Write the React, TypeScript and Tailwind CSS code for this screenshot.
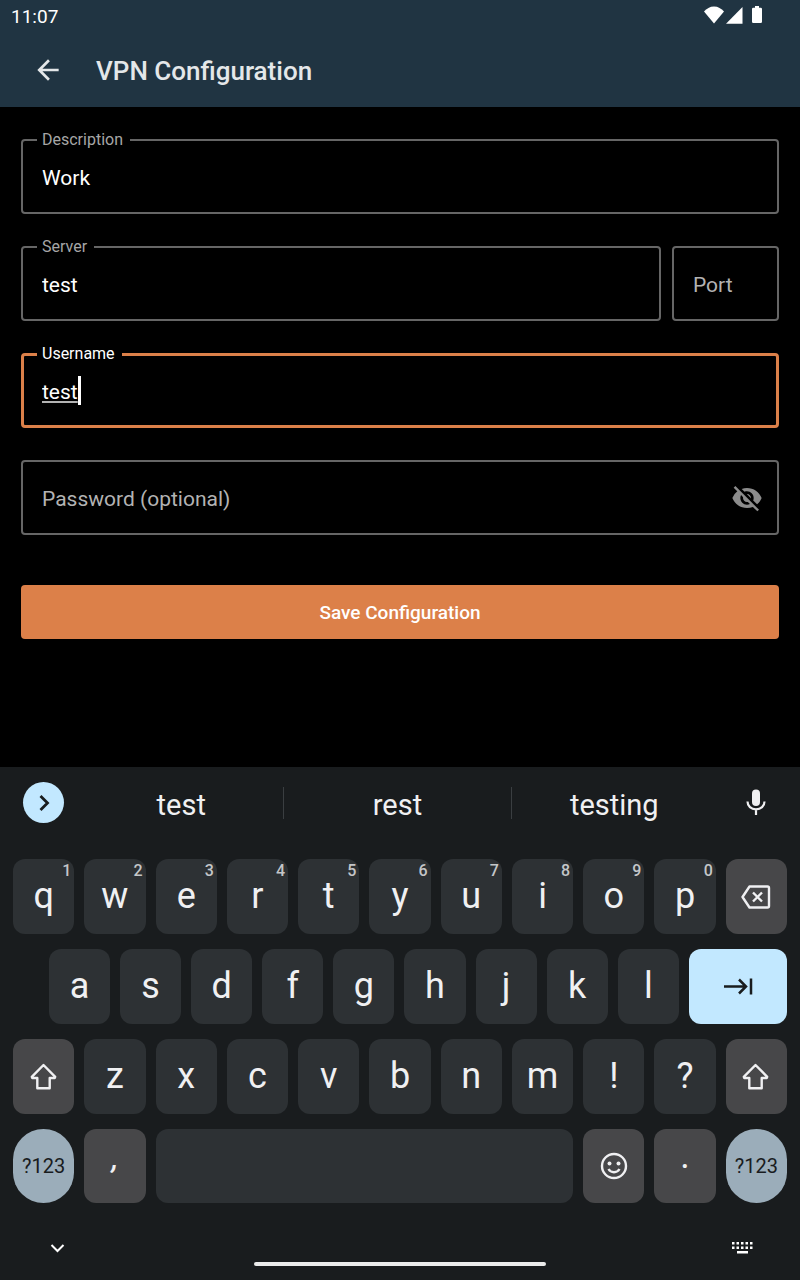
import type { ReactNode } from "react";
import { MdArrowBack, MdVisibilityOff } from "react-icons/md";

const SUGGESTIONS = ["test", "rest", "testing"];

const TOP_ROW = [
  { key: "q", hint: "1" },
  { key: "w", hint: "2" },
  { key: "e", hint: "3" },
  { key: "r", hint: "4" },
  { key: "t", hint: "5" },
  { key: "y", hint: "6" },
  { key: "u", hint: "7" },
  { key: "i", hint: "8" },
  { key: "o", hint: "9" },
  { key: "p", hint: "0" },
];

const HOME_ROW = ["a", "s", "d", "f", "g", "h", "j", "k", "l"];

const BOTTOM_ROW = ["z", "x", "c", "v", "b", "n", "m", "!", "?"];

const KEY = "relative flex items-center justify-center rounded-xl";
const LETTER = `${KEY} bg-[#2d3134] pb-0.5 text-4xl text-[#f0f0f2]`;
const ACTION = `${KEY} bg-[#474749] text-[#f0f0f2]`;
const SYMBOLS = "rounded-full bg-[#9badba] text-xl text-[#191c1e]";

function StatusBar() {
  return (
    <div className="flex h-8 items-center justify-between pr-[38px] pl-[11px] text-white">
      <span className="pt-0.5 text-[19px] leading-6">11:07</span>
      <div className="flex items-center pb-0.5">
        <svg width="20" height="18" viewBox="0 0 20 18" className="mr-0.5" fill="currentColor">
          <path d="M10 17.500 0 5.500C2.600 2.500 6 .5 10 .5s7.400 2 10 5z" />
        </svg>
        <svg width="17" height="18" viewBox="0 0 17 18" className="mr-[9px]" fill="currentColor">
          <path d="M0 17.800 16.500 1v16.800z" />
        </svg>
        <svg width="10" height="18" viewBox="0 0 10 18" fill="currentColor">
          <path d="M3 0h4v1.700h1.700Q10 1.700 10 3v12.700q0 1.300-1.300 1.300H1.300Q0 17 0 15.700V3Q0 1.700 1.300 1.700H3z" />
        </svg>
      </div>
    </div>
  );
}

function Field({
  id,
  label,
  value,
}: {
  id: string;
  label: string;
  value: string;
}) {
  return (
    <div className="relative min-w-0 flex-1">
      <label
        htmlFor={id}
        className="absolute -top-[9px] left-4 bg-black pr-[7px] pl-[5px] text-base leading-5 text-[#a6a6a6]"
      >
        {label}
      </label>
      <input
        id={id}
        type="text"
        defaultValue={value}
        className="h-[75px] w-full rounded border-2 border-[#666666] bg-transparent px-[19px] pt-0.5 text-[21px] text-white outline-none"
      />
    </div>
  );
}

function ShiftIcon() {
  return (
    <svg width="28" height="28" viewBox="0 0 28 28" fill="none" stroke="currentColor" strokeWidth="2.400" strokeLinejoin="round">
      <path d="M13.500 2 1.800 13.800l.5 1.200h5v10.300h12.400V15h5l.5-1.200z" />
    </svg>
  );
}

function Row({ children }: { children: ReactNode }) {
  return <div className="grid h-[75px] grid-cols-11 gap-2.5">{children}</div>;
}

function Keyboard() {
  return (
    <section aria-label="Keyboard" className="bg-[#191c1e] px-[13px]">
      <div className="flex h-[92px] items-start pt-[15px]">
        <button
          aria-label="More"
          className="ml-2.5 flex size-[41px] shrink-0 items-center justify-center rounded-full bg-[#c2e8ff] text-[#191c1e]"
        >
          <svg width="20" height="20" viewBox="0 0 20 20" fill="none" stroke="currentColor" strokeWidth="2.800">
            <path d="m6.500 3 7 7-7 7" />
          </svg>
        </button>
        <div className="mr-6 ml-4 grid flex-1 grid-cols-[8fr_9fr_8fr] divide-x divide-[#3a3e41] pt-[5px]">
          {SUGGESTIONS.map((word) => (
            <button key={word} className="h-8 pt-0.5 text-[29px] leading-8 text-[#f0f0f2]">
              {word}
            </button>
          ))}
        </div>
        <button aria-label="Voice input" className="mt-1 mr-[15px] text-[#f0f0f2]">
          <svg width="32" height="32" viewBox="0 0 32 32" fill="none">
            <rect x="12" y="3.500" width="8" height="16.500" rx="4" fill="currentColor" />
            <path d="M7.500 15.500c0 4.600 3.600 7.800 8.500 7.800s8.500-3.200 8.500-7.800M16 23.300V29" stroke="currentColor" strokeWidth="2.200" />
          </svg>
        </button>
      </div>

      <div className="flex flex-col gap-[15px]">
        <Row>
          {TOP_ROW.map((k) => (
            <button key={k.key} className={LETTER}>
              {k.key}
              <span className="absolute top-1 right-[3px] text-base leading-4 font-medium text-[#c4c6c8]">
                {k.hint}
              </span>
            </button>
          ))}
          <button aria-label="Backspace" className={ACTION}>
            <svg width="30" height="26" viewBox="0 0 30 26" fill="none" stroke="currentColor" strokeWidth="2.400" strokeLinejoin="round">
              <path d="M8.500 2.500h18q1.500 0 1.500 1.500v18q0 1.500-1.500 1.500h-18L1.500 13z" />
              <path d="m12 8.500 9 9m0-9-9 9" />
            </svg>
          </button>
        </Row>

        <div className="flex h-[75px] gap-2.5 pl-9">
          {HOME_ROW.map((k) => (
            <button key={k} className={`${LETTER} flex-[61]`}>
              {k}
            </button>
          ))}
          <button aria-label="Next field" className={`${KEY} flex-[98] bg-[#c2e8ff] text-[#191c1e]`}>
            <svg width="30" height="18" viewBox="0 0 30 18" fill="none" stroke="currentColor" strokeWidth="2.500">
              <path d="M1 8.500h22M16 1.500l7 7-7 7M28 .5v16" />
            </svg>
          </button>
        </div>

        <Row>
          <button aria-label="Shift" className={ACTION}>
            <ShiftIcon />
          </button>
          {BOTTOM_ROW.map((k) => (
            <button key={k} className={LETTER}>
              {k}
            </button>
          ))}
          <button aria-label="Shift" className={ACTION}>
            <ShiftIcon />
          </button>
        </Row>

        <div className="grid h-[74px] grid-cols-11 gap-2.5">
          <button className={SYMBOLS}>?123</button>
          <button className={`${ACTION} pb-4 text-3xl font-medium italic`}>,</button>
          <button aria-label="Space" className={`${LETTER} col-span-6`} />
          <button aria-label="Emoji" className={ACTION}>
            <svg width="28" height="28" viewBox="0 0 28 28" fill="none" stroke="currentColor" strokeWidth="2.400">
              <circle cx="14" cy="14" r="12" />
              <circle cx="9.500" cy="11.500" r="2" fill="currentColor" stroke="none" />
              <circle cx="18.500" cy="11.500" r="2" fill="currentColor" stroke="none" />
              <path d="M8.500 17c1.200 2.200 3.200 3.200 5.500 3.200s4.300-1 5.500-3.200" />
            </svg>
          </button>
          <button className={`${ACTION} pb-5 text-4xl`}>.</button>
          <button className={SYMBOLS}>?123</button>
        </div>
      </div>

      <nav className="flex h-[77px] items-center justify-between px-[34px] pt-3 text-white">
        <button aria-label="Hide keyboard">
          <svg width="22" height="20" viewBox="0 0 22 20" fill="none" stroke="currentColor" strokeWidth="2">
            <path d="m4.500 7 6 6 6-6" />
          </svg>
        </button>
        <div className="mt-8 h-1 w-[292px] rounded-full bg-[#ebebeb]" />
        <button aria-label="Switch keyboard">
          <svg width="22" height="14" viewBox="0 0 22 14" fill="currentColor">
            {[0, 1, 2, 3, 4].map((col) => (
              <g key={col}>
                <rect x={1 + col * 4.5} y="1" width="2.500" height="2.500" />
                <rect x={1 + col * 4.5} y="5.500" width="2.500" height="2.500" />
              </g>
            ))}
            <rect x="6" y="10" width="11" height="2.500" />
          </svg>
        </button>
      </nav>
    </section>
  );
}

export default function App() {
  return (
    <div className="flex min-h-screen flex-col bg-black font-['Roboto',sans-serif]">
      <header className="bg-[#203442]">
        <StatusBar />
        <div className="flex h-[75px] items-center gap-8 px-8 text-[#e4e7e9]">
          <button aria-label="Back">
            <MdArrowBack size={32} />
          </button>
          <h1 className="pt-0.5 text-[26px] leading-8 font-medium">VPN Configuration</h1>
        </div>
      </header>

      <form className="flex flex-1 flex-col px-[21px] pt-8" onSubmit={(e) => e.preventDefault()}>
        <div className="flex flex-col gap-8">
          <Field id="description" label="Description" value="Work" />

          <div className="flex gap-[11px]">
            <Field id="server" label="Server" value="test" />
            <input
              type="text"
              aria-label="Port"
              placeholder="Port"
              className="h-[75px] w-[107px] rounded border-2 border-[#666666] bg-transparent px-[19px] pt-0.5 text-[21px] text-white outline-none placeholder:text-[#b3b3b3]"
            />
          </div>

          <div className="relative flex h-[75px] items-center rounded border-3 border-[#dc8049] px-[18px]">
            <label
              htmlFor="username"
              className="absolute -top-3 left-[13px] bg-black pr-[7px] pl-[5px] text-base leading-5 text-white"
            >
              Username
            </label>
            <input
              id="username"
              type="text"
              defaultValue="test"
              className="field-sizing-content max-w-full bg-transparent pt-1 text-[21px] text-white underline decoration-[#b3b3b3] decoration-2 underline-offset-2 outline-none"
            />
            <span className="h-[29px] w-[3px] bg-white" />
          </div>

          <div className="flex h-[75px] items-center rounded border-2 border-[#666666] pr-3.5 pl-[19px]">
            <input
              type="password"
              aria-label="Password (optional)"
              placeholder="Password (optional)"
              className="min-w-0 flex-1 bg-transparent pt-1 text-[21px] text-white outline-none placeholder:text-[#b3b3b3]"
            />
            <button type="button" aria-label="Show password" className="text-[#8c8c8c]">
              <MdVisibilityOff size={32} />
            </button>
          </div>
        </div>

        <button type="submit" className="mt-[50px] h-[54px] rounded bg-[#dc8049] pt-0.5 text-[19px] font-medium text-white">
          Save Configuration
        </button>
      </form>

      <Keyboard />
    </div>
  );
}
